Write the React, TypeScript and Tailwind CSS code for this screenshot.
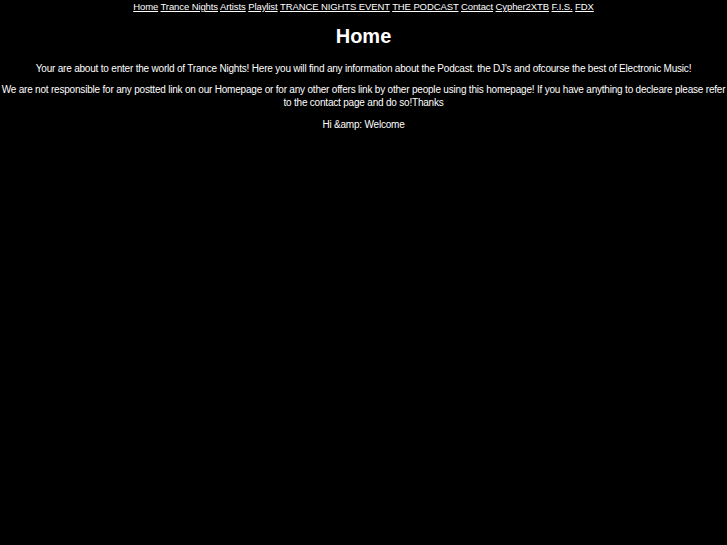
import React from 'react';

const links = ['Home', 'Trance Nights', 'Artists', 'Playlist', 'TRANCE NIGHTS EVENT', 'THE PODCAST', 'Contact', 'Cypher2XTB', 'F.I.S.', 'FDX'];

const App: React.FC = () => {
  return (
    <div className="min-h-[545px] bg-black text-white text-center text-[10px] leading-[13px] tracking-[-0.2px] font-['Liberation_Sans',Arial,sans-serif]">
      <div className="text-[9.5px] leading-[13px] tracking-[-0.1px]">
        {links.map((l, i) => (
          <React.Fragment key={l}>
            <a href="#" className="underline">{l}</a>
            {i < links.length - 1 && ' '}
          </React.Fragment>
        ))}
      </div>
      <h1 className="text-[20px] leading-[24px] font-bold tracking-normal mt-[11px] mb-[14px]">Home</h1>
      <p className="mt-[14px] mb-[8px]">
        Your are about to enter the world of Trance Nights! Here you will find any information about the Podcast. the DJ's and ofcourse the best of Electronic Music!
      </p>
      <p className="mt-[8px] mb-[9px]">
        We are not responsible for any postted link on our Homepage or for any other offers link by other people using this homepage! If you have anything to decleare please refer to the contact page and do so!Thanks
      </p>
      <p className="my-[9px]">Hi &amp;amp: Welcome</p>
    </div>
  );
};

export default App;
